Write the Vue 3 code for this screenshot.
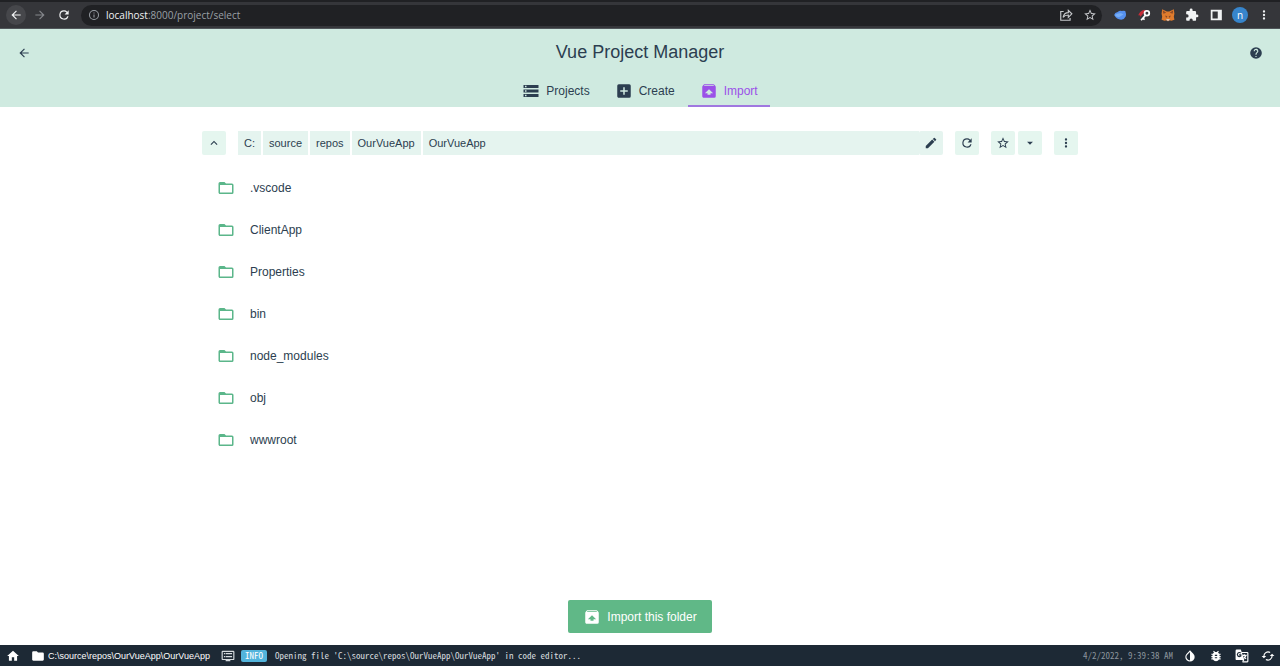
<script setup>
import { ref } from 'vue'

const icons = {
  back: 'M20 11v2H8l5.500 5.500-1.420 1.420L4.160 12l7.920-7.920L13.500 5.500 8 11z',
  forward: 'M4 11v2h12l-5.500 5.500 1.420 1.420L19.840 12l-7.920-7.920L10.500 5.500 16 11z',
  reload: 'M17.650 6.350A7.960 7.960 0 0 0 12 4a8 8 0 1 0 7.730 10h-2.080A6 6 0 1 1 12 6c1.660 0 3.140.69 4.220 1.780L13 11h7V4z',
  info: 'M11 7h2v2h-2zm0 4h2v6h-2zm1-9a10 10 0 1 0 0 20 10 10 0 0 0 0-20m0 18a8 8 0 1 1 0-16 8 8 0 0 1 0 16',
  star: 'M22 9.240l-7.190-.62L12 2 9.190 8.630 2 9.240l5.460 4.730L5.820 21 12 17.270 18.180 21l-1.630-7.030zM12 15.400l-3.760 2.270 1-4.280-3.320-2.880 4.380-.38L12 6.100l1.710 4.040 4.380.38-3.320 2.880 1 4.280z',
  puzzle: 'M20.500 11H19V7a2 2 0 0 0-2-2h-4V3.500a2.500 2.500 0 0 0-5 0V5H4a2 2 0 0 0-2 2v3.800h1.500a2.700 2.700 0 0 1 0 5.400H2V20c0 1.100.9 2 2 2h3.800v-1.500a2.700 2.700 0 0 1 5.400 0V22H17a2 2 0 0 0 2-2v-4h1.500a2.500 2.500 0 0 0 0-5z',
  more: 'M12 8a2 2 0 1 0 0-4 2 2 0 0 0 0 4m0 2a2 2 0 1 0 0 4 2 2 0 0 0 0-4m0 6a2 2 0 1 0 0 4 2 2 0 0 0 0-4',
  help: 'M12 2a10 10 0 1 0 0 20 10 10 0 0 0 0-20m1 17h-2v-2h2zm2.070-7.750-.9.920C13.450 12.900 13 13.500 13 15h-2v-.5c0-1.100.45-2.100 1.170-2.830l1.240-1.260A2 2 0 1 0 10 9H8a4 4 0 1 1 7.070 2.250',
  storage: 'M2 20h20v-4H2zm2-3h2v2H4zM2 4v4h20V4zm4 3H4V5h2zm-4 7h20v-4H2zm2-3h2v2H4z',
  add: 'M19 3H5a2 2 0 0 0-2 2v14c0 1.100.9 2 2 2h14a2 2 0 0 0 2-2V5a2 2 0 0 0-2-2m-2 10h-4v4h-2v-4H7v-2h4V7h2v4h4z',
  unarchive: 'M20.550 5.220l-1.390-1.680A1.500 1.500 0 0 0 18 3H6c-.47 0-.88.21-1.150.55L3.460 5.220C3.170 5.570 3 6.010 3 6.500V19c0 1.100.89 2 2 2h14a2 2 0 0 0 2-2V6.500c0-.49-.17-.93-.45-1.280M12 9.500l5.500 5.500H14v2h-4v-2H6.500zM5.120 5l.82-1h12l.93 1z',
  up: 'M7.410 15.410L12 10.830l4.590 4.580L18 14l-6-6-6 6z',
  edit: 'M3 17.250V21h3.750L17.810 9.940l-3.750-3.750zM20.710 7.040a1 1 0 0 0 0-1.410l-2.340-2.340a1 1 0 0 0-1.410 0l-1.830 1.830 3.750 3.750z',
  down: 'M7 10l5 5 5-5z',
  folderOpen: 'M20 6h-8l-2-2H4a2 2 0 0 0-2 2v12c0 1.100.9 2 2 2h16a2 2 0 0 0 2-2V8a2 2 0 0 0-2-2m0 12H4V8h16z',
  folder: 'M10 4H4a2 2 0 0 0-2 2v12c0 1.100.9 2 2 2h16a2 2 0 0 0 2-2V8a2 2 0 0 0-2-2h-8z',
  home: 'M10 20v-6h4v6h5v-8h3L12 3 2 12h3v8z',
  log: 'M21 3H3a2 2 0 0 0-2 2v12c0 1.100.9 2 2 2h5v2h8v-2h5a2 2 0 0 0 2-2V5a2 2 0 0 0-2-2m0 14H3V5h18zM8 7h11v2H8zm0 5h11v2H8zM5 7h2v2H5zm0 5h2v2H5z',
  contrast: 'M17.660 7.930L12 2.270 6.340 7.930a8 8 0 1 0 11.320 0M12 19.590a6 6 0 0 1-4.240-10.240L12 5.100z',
  bug: 'M20 8h-2.810a6 6 0 0 0-1.820-1.960L17 4.410 15.590 3l-2.170 2.170a6 6 0 0 0-2.830 0L8.410 3 7 4.410l1.620 1.630A6 6 0 0 0 6.810 8H4v2h2.090L6 11v1H4v2h2v1l.09 1H4v2h2.810a6 6 0 0 0 10.380 0H20v-2h-2.090L18 15v-1h2v-2h-2v-1l-.09-1H20zm-6 8h-4v-2h4zm0-4h-4v-2h4z',
  sync: 'M19 8l-4 4h3a6 6 0 0 1-8.800 5.300l-1.460 1.460A8 8 0 0 0 20 12h3zM6 12a6 6 0 0 1 8.800-5.300l1.460-1.460A8 8 0 0 0 4 12H1l4 4 4-4z'
}

const tabs = [
  { label: 'Projects', icon: 'storage' },
  { label: 'Create', icon: 'add' },
  { label: 'Import', icon: 'unarchive' }
]
const activeTab = ref('Import')
const crumbs = ['C:', 'source', 'repos', 'OurVueApp', 'OurVueApp']
const folders = ['.vscode', 'ClientApp', 'Properties', 'bin', 'node_modules', 'obj', 'wwwroot']
</script>

<template>
  <div class="window">
    <div class="browser">
      <button class="nav current" aria-label="Back"><svg viewBox="0 0 24 24"><path :d="icons.back" /></svg></button>
      <button class="nav dim" aria-label="Forward"><svg viewBox="0 0 24 24"><path :d="icons.forward" /></svg></button>
      <button class="nav" aria-label="Reload"><svg viewBox="0 0 24 24"><path :d="icons.reload" /></svg></button>
      <div class="address">
        <svg class="site" viewBox="0 0 24 24"><path :d="icons.info" /></svg>
        <span class="url"><b>localhost</b>:8000/project/select</span>
        <button class="nav soft" aria-label="Share">
          <svg viewBox="0 0 24 24" class="line"><path d="M8 6H3v15h16v-4M7 16c1-5 4-8 9-8V4l6 6-6 6v-4c-4 0-7 1-9 4z" /></svg>
        </button>
        <button class="nav soft" aria-label="Bookmark"><svg viewBox="0 0 24 24"><path :d="icons.star" /></svg></button>
      </div>
      <div class="extensions">
        <button class="nav" aria-label="Blue extension">
          <svg viewBox="0 0 24 24"><path fill="#5590ee" d="M2 12Q3 8 8 7q3-3 7-2 3-1 6 0 2 5 1 9-2 5-8 6-8 0-12-8" /><path fill="#78aef5" d="M3 12q5-4 11-3l4 2-8 5q-5-1-7-4" /></svg>
        </button>
        <button class="nav" aria-label="Key extension">
          <svg viewBox="0 0 24 24"><path fill="#c52c38" d="M2 13q2-7 10-10l7 2-8 4-5 6-2-3z" /><path fill="none" stroke="#fff" stroke-width="3" d="M14 13l-7 8m2-4 4 3" /><circle cx="17" cy="9" r="4" fill="#35363a" stroke="#fff" stroke-width="3" /></svg>
        </button>
        <button class="nav" aria-label="Fox extension">
          <svg viewBox="0 0 24 24"><path fill="#df7b2d" d="M2 2l8 4h4l8-4 1 8-1 5 1 5-5 2-4-1-2 2-2-2-4 1-5-2 1-5-1-5z" /><path fill="#8f4b25" d="M3 4l6 4-5 2zM21 4l-6 4 5 2zM7 13l4 1-2 3zM17 13l-4 1 2 3z" /><path fill="#d8c1af" d="M9 19h6l-1 3h-4z" /></svg>
        </button>
        <button class="nav" aria-label="Extensions"><svg viewBox="0 0 24 24"><path :d="icons.puzzle" /></svg></button>
        <button class="nav" aria-label="Side panel"><svg viewBox="0 0 24 24"><path fill-rule="evenodd" d="M3 3h19v18H3zm3 3v12h9V6z" /></svg></button>
        <button class="avatar" aria-label="Profile">n</button>
        <button class="nav" aria-label="Menu"><svg viewBox="0 0 24 24"><path :d="icons.more" /></svg></button>
      </div>
    </div>

    <header class="header">
      <div class="title-row">
        <button class="plain" aria-label="Go back"><svg viewBox="0 0 24 24"><path :d="icons.back" /></svg></button>
        <h1>Vue Project Manager</h1>
        <button class="plain" aria-label="Help"><svg viewBox="0 0 24 24"><path :d="icons.help" /></svg></button>
      </div>
      <nav class="tabs">
        <button v-for="tab in tabs" :key="tab.label" class="tab" :class="{ active: activeTab === tab.label }" @click="activeTab = tab.label">
          <svg viewBox="0 0 24 24"><path :d="icons[tab.icon]" /></svg>
          {{ tab.label }}
        </button>
      </nav>
    </header>

    <main class="content">
      <div class="toolbar">
        <button class="tool" aria-label="Parent folder"><svg viewBox="0 0 24 24"><path :d="icons.up" /></svg></button>
        <div class="path">
          <button v-for="(crumb, i) in crumbs" :key="i" class="crumb">{{ crumb }}</button>
          <button class="tool edit" aria-label="Edit path"><svg viewBox="0 0 24 24"><path :d="icons.edit" /></svg></button>
        </div>
        <button class="tool" aria-label="Refresh"><svg viewBox="0 0 24 24"><path :d="icons.reload" /></svg></button>
        <div class="favorites">
          <button class="tool" aria-label="Favorite"><svg viewBox="0 0 24 24"><path :d="icons.star" /></svg></button>
          <button class="tool" aria-label="Show favorites"><svg viewBox="0 0 24 24"><path :d="icons.down" /></svg></button>
        </div>
        <button class="tool" aria-label="More options"><svg viewBox="0 0 24 24"><path :d="icons.more" /></svg></button>
      </div>
      <ul class="folders">
        <li v-for="folder in folders" :key="folder">
          <button class="folder">
            <svg viewBox="0 0 24 24"><path :d="icons.folderOpen" /></svg>
            {{ folder }}
          </button>
        </li>
      </ul>
      <button class="import">
        <svg viewBox="0 0 24 24"><path :d="icons.unarchive" /></svg>
        Import this folder
      </button>
    </main>

    <footer class="status">
      <button class="status-item" aria-label="Home"><svg viewBox="0 0 24 24"><path :d="icons.home" /></svg></button>
      <button class="status-item location">
        <svg viewBox="0 0 24 24"><path :d="icons.folder" /></svg>
        C:\source\repos\OurVueApp\OurVueApp
      </button>
      <button class="status-item log">
        <svg viewBox="0 0 24 24"><path :d="icons.log" /></svg>
        <span class="badge">INFO</span>
        <span>Opening file 'C:\source\repos\OurVueApp\OurVueApp' in code editor...</span>
      </button>
      <time class="date">4/2/2022, 9:39:38 AM</time>
      <div class="status-tools">
        <button class="status-item" aria-label="Toggle theme"><svg viewBox="0 0 24 24"><path :d="icons.contrast" /></svg></button>
        <button class="status-item" aria-label="Report a bug"><svg viewBox="0 0 24 24"><path :d="icons.bug" /></svg></button>
        <button class="status-item" aria-label="Translate">
          <svg viewBox="0 0 24 24"><path fill="none" stroke="currentColor" stroke-width="2" d="M11 6h10q1 0 1 1v14q0 1-1 1h-8" /><path d="M3 1h7l6 18H3q-2 0-2-2V3q0-2 2-2m10 18h3l-3 4z" /><path class="translate-mark" d="M10 7q-3-2-5 0t0 5q2 2 5 0v-2H7" /><path fill="none" stroke="currentColor" stroke-width="2" d="M13 11h7m-4-2v2m3 0q-1 3-4 5m0-3 4 4" /></svg>
        </button>
        <button class="status-item" aria-label="Sync"><svg viewBox="0 0 24 24"><path :d="icons.sync" /></svg></button>
      </div>
    </footer>
  </div>
</template>

<style>
body {
  margin: 0;
}
</style>

<style scoped>
.window {
  display: flex;
  flex-direction: column;
  min-height: 100vh;
  background: #fff;
  color: #2c3e50;
  font: 12px/16px "Liberation Sans", Arial, sans-serif;
}
button {
  display: flex;
  align-items: center;
  justify-content: center;
  margin: 0;
  padding: 0;
  border: 0;
  background: none;
  color: inherit;
  font: inherit;
  white-space: nowrap;
  cursor: pointer;
}
svg {
  display: block;
  flex: none;
  width: 14px;
  height: 14px;
  fill: currentColor;
}
.browser {
  display: flex;
  align-items: center;
  height: 26px;
  padding: 0 4px;
  border-top: 2px solid #202124;
  border-bottom: 1px solid #50565a;
  background: #35363a;
  color: #f1f3f4;
  font: 10px/14px "Open Sans", "Noto Sans", sans-serif;
}
.nav {
  width: 24px;
  height: 20px;
}
.current svg {
  padding: 3px;
  border-radius: 50%;
  background: #46474b;
}
.dim {
  color: #85878b;
}
.address {
  display: flex;
  flex: 1;
  align-items: center;
  height: 21px;
  margin-left: 5px;
  padding-left: 7px;
  border-radius: 11px;
  background: #202124;
  color: #9aa0a6;
}
.site {
  width: 12px;
  height: 12px;
  margin-right: 6px;
}
.url {
  flex: 1;
}
.url b {
  color: #f1f3f4;
  font-weight: 400;
}
.soft {
  color: #c5c7ca;
}
.line {
  fill: none;
  stroke: currentColor;
  stroke-width: 2;
}
.extensions {
  display: flex;
  align-items: center;
  margin-left: 6px;
}
.avatar {
  width: 16px;
  height: 16px;
  margin: 0 4px;
  border-radius: 50%;
  background: #3785cc;
  color: #fff;
}
.header {
  display: flex;
  flex-direction: column;
  height: 78px;
  background: #cfeae0;
}
.title-row {
  display: flex;
  align-items: center;
  justify-content: space-between;
  height: 45px;
  padding: 0 12px;
}
.plain {
  width: 24px;
  height: 24px;
  margin-top: 3px;
}
h1 {
  margin: 0;
  font-size: 18px;
  font-weight: 400;
  line-height: 24px;
}
.tabs {
  display: flex;
  flex: 1;
  gap: 1px;
  justify-content: center;
}
.tab {
  gap: 6px;
  padding: 2px 12px 0;
  border-bottom: 2px solid transparent;
}
.tab svg,
.import svg {
  width: 18px;
  height: 18px;
}
.tab.active {
  border-color: #a078e0;
  color: #9b51e8;
}
.content {
  display: flex;
  flex: 1;
  flex-direction: column;
  box-sizing: border-box;
  width: 100%;
  max-width: 900px;
  margin: 0 auto;
  padding: 24px 12px 12px;
}
.toolbar {
  display: flex;
  gap: 12px;
}
.tool {
  width: 24px;
  height: 24px;
  border-radius: 2px;
  background: #e5f6ef;
}
.path {
  display: flex;
  flex: 1;
  gap: 2px;
}
.crumb {
  padding: 0 6px;
  background: #e5f4ef;
  font-size: 11px;
}
.crumb:nth-last-child(2) {
  flex: 1;
  justify-content: flex-start;
  margin-right: -2px;
}
.edit {
  background: #e5f4ef;
}
.favorites {
  display: flex;
  gap: 3px;
}
.folders {
  flex: 1;
  margin: 12px 0;
  padding: 0;
  list-style: none;
}
.folder {
  justify-content: flex-start;
  gap: 15px;
  width: 100%;
  height: 42px;
  padding: 0 15px;
}
.folder svg {
  width: 18px;
  height: 18px;
  color: #5bb68a;
}
.import {
  align-self: center;
  gap: 6px;
  height: 33px;
  padding: 0 15px;
  border-radius: 2px;
  background: #60b887;
  color: #fff;
}
.status {
  display: flex;
  align-items: center;
  height: 21px;
  padding: 0 3px 0 4px;
  background: #1d2935;
  color: #fff;
  font-size: 9px;
  line-height: 12px;
}
.status-item {
  height: 21px;
  padding: 0 2px;
}
.location {
  gap: 3px;
  padding: 0 9px;
}
.log {
  gap: 6px;
}
.log,
.date {
  font-family: "Noto Sans Mono CJK SC", "Liberation Mono", monospace;
}
.log {
  color: #d5dade;
}
.badge {
  margin-right: 2px;
  padding: 0 4px;
  border-radius: 2px;
  background: #52b4dc;
  color: #fff;
}
.date {
  margin-left: auto;
  color: #8c959d;
}
.status-tools {
  display: flex;
  gap: 8px;
  margin-left: 8px;
}
.translate-mark {
  fill: none;
  stroke: #1d2935;
  stroke-width: 2;
}
</style>
